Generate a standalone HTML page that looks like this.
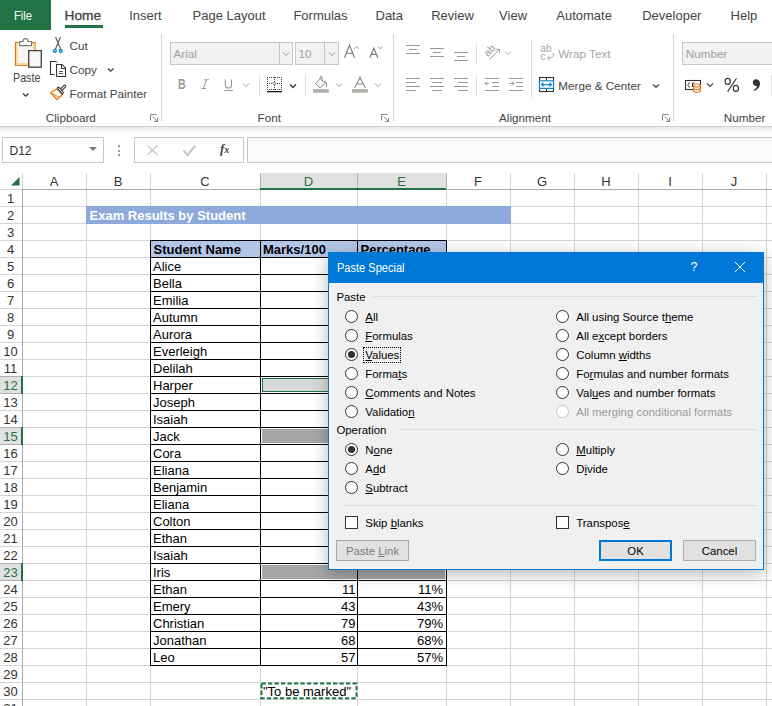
<!DOCTYPE html><html><head><meta charset="utf-8"><style>
*{margin:0;padding:0;box-sizing:border-box}
html,body{width:772px;height:706px;overflow:hidden;background:#fff;font-family:"Liberation Sans",sans-serif}
.t{position:absolute;line-height:1;white-space:nowrap}
.r{position:absolute}
</style></head><body>
<div class="r" style="left:0px;top:0px;width:772px;height:126px;background:#fff;"></div>
<div class="r" style="left:0px;top:0px;width:51px;height:30px;background:#217346;"></div>
<div class="t" style="left:14.20px;top:9.62px;font-size:12.5px;color:#fff;font-weight:normal;transform:scaleX(0.9);transform-origin:0 0">File</div>
<div class="t" style="left:64.60px;top:8.70px;font-size:13.7px;color:#444;font-weight:normal;-webkit-text-stroke:0.35px #444">Home</div>
<div class="t" style="left:129.20px;top:9.30px;font-size:13px;color:#444;font-weight:normal;">Insert</div>
<div class="t" style="left:192.50px;top:9.30px;font-size:13px;color:#444;font-weight:normal;">Page Layout</div>
<div class="t" style="left:293.40px;top:9.30px;font-size:13px;color:#444;font-weight:normal;">Formulas</div>
<div class="t" style="left:375.50px;top:9.30px;font-size:13px;color:#444;font-weight:normal;">Data</div>
<div class="t" style="left:431.20px;top:9.30px;font-size:13px;color:#444;font-weight:normal;">Review</div>
<div class="t" style="left:499.10px;top:9.30px;font-size:13px;color:#444;font-weight:normal;">View</div>
<div class="t" style="left:556.30px;top:9.30px;font-size:13px;color:#444;font-weight:normal;">Automate</div>
<div class="t" style="left:642.20px;top:9.30px;font-size:13px;color:#444;font-weight:normal;">Developer</div>
<div class="t" style="left:730.60px;top:9.30px;font-size:13px;color:#444;font-weight:normal;">Help</div>
<div class="r" style="left:65px;top:25px;width:38px;height:3px;background:#217346;"></div>
<div class="r" style="left:0px;top:126px;width:772px;height:47px;background:#fff;"></div>
<div class="r" style="left:0px;top:173px;width:772px;height:16px;background:#fff;"></div>
<div class="r" style="left:260px;top:173px;width:186px;height:16px;background:#e1e1e1;"></div>
<div class="r" style="left:86px;top:173px;width:1px;height:533px;background:#d4d4d4;"></div>
<div class="r" style="left:150px;top:173px;width:1px;height:533px;background:#d4d4d4;"></div>
<div class="r" style="left:260px;top:173px;width:1px;height:533px;background:#d4d4d4;"></div>
<div class="r" style="left:357px;top:173px;width:1px;height:533px;background:#d4d4d4;"></div>
<div class="r" style="left:446px;top:173px;width:1px;height:533px;background:#d4d4d4;"></div>
<div class="r" style="left:510px;top:173px;width:1px;height:533px;background:#d4d4d4;"></div>
<div class="r" style="left:574px;top:173px;width:1px;height:533px;background:#d4d4d4;"></div>
<div class="r" style="left:638px;top:173px;width:1px;height:533px;background:#d4d4d4;"></div>
<div class="r" style="left:702px;top:173px;width:1px;height:533px;background:#d4d4d4;"></div>
<div class="r" style="left:766px;top:173px;width:1px;height:533px;background:#d4d4d4;"></div>
<div class="r" style="left:0px;top:189px;width:772px;height:1px;background:#d4d4d4;"></div>
<div class="r" style="left:0px;top:206px;width:772px;height:1px;background:#d4d4d4;"></div>
<div class="r" style="left:0px;top:223px;width:772px;height:1px;background:#d4d4d4;"></div>
<div class="r" style="left:0px;top:240px;width:772px;height:1px;background:#d4d4d4;"></div>
<div class="r" style="left:0px;top:257px;width:772px;height:1px;background:#d4d4d4;"></div>
<div class="r" style="left:0px;top:274px;width:772px;height:1px;background:#d4d4d4;"></div>
<div class="r" style="left:0px;top:291px;width:772px;height:1px;background:#d4d4d4;"></div>
<div class="r" style="left:0px;top:308px;width:772px;height:1px;background:#d4d4d4;"></div>
<div class="r" style="left:0px;top:325px;width:772px;height:1px;background:#d4d4d4;"></div>
<div class="r" style="left:0px;top:342px;width:772px;height:1px;background:#d4d4d4;"></div>
<div class="r" style="left:0px;top:359px;width:772px;height:1px;background:#d4d4d4;"></div>
<div class="r" style="left:0px;top:376px;width:772px;height:1px;background:#d4d4d4;"></div>
<div class="r" style="left:0px;top:393px;width:772px;height:1px;background:#d4d4d4;"></div>
<div class="r" style="left:0px;top:410px;width:772px;height:1px;background:#d4d4d4;"></div>
<div class="r" style="left:0px;top:427px;width:772px;height:1px;background:#d4d4d4;"></div>
<div class="r" style="left:0px;top:444px;width:772px;height:1px;background:#d4d4d4;"></div>
<div class="r" style="left:0px;top:461px;width:772px;height:1px;background:#d4d4d4;"></div>
<div class="r" style="left:0px;top:478px;width:772px;height:1px;background:#d4d4d4;"></div>
<div class="r" style="left:0px;top:495px;width:772px;height:1px;background:#d4d4d4;"></div>
<div class="r" style="left:0px;top:512px;width:772px;height:1px;background:#d4d4d4;"></div>
<div class="r" style="left:0px;top:529px;width:772px;height:1px;background:#d4d4d4;"></div>
<div class="r" style="left:0px;top:546px;width:772px;height:1px;background:#d4d4d4;"></div>
<div class="r" style="left:0px;top:563px;width:772px;height:1px;background:#d4d4d4;"></div>
<div class="r" style="left:0px;top:580px;width:772px;height:1px;background:#d4d4d4;"></div>
<div class="r" style="left:0px;top:597px;width:772px;height:1px;background:#d4d4d4;"></div>
<div class="r" style="left:0px;top:614px;width:772px;height:1px;background:#d4d4d4;"></div>
<div class="r" style="left:0px;top:631px;width:772px;height:1px;background:#d4d4d4;"></div>
<div class="r" style="left:0px;top:648px;width:772px;height:1px;background:#d4d4d4;"></div>
<div class="r" style="left:0px;top:665px;width:772px;height:1px;background:#d4d4d4;"></div>
<div class="r" style="left:0px;top:682px;width:772px;height:1px;background:#d4d4d4;"></div>
<div class="r" style="left:0px;top:699px;width:772px;height:1px;background:#d4d4d4;"></div>
<div class="r" style="left:0px;top:716px;width:772px;height:1px;background:#d4d4d4;"></div>
<div class="r" style="left:22px;top:173px;width:1px;height:16px;background:#d4d4d4;"></div>
<div class="r" style="left:22px;top:189px;width:1px;height:517px;background:#ababab;"></div>
<div class="r" style="left:22px;top:189px;width:772px;height:1px;background:#ababab;"></div>
<div class="r" style="left:260px;top:188px;width:186px;height:2px;background:#217346;"></div>
<div class="r" style="left:260px;top:173px;width:1px;height:15px;background:#b0b0b0;"></div>
<div class="r" style="left:357px;top:173px;width:1px;height:15px;background:#b0b0b0;"></div>
<div class="r" style="left:446px;top:173px;width:1px;height:15px;background:#b0b0b0;"></div>
<svg class="r" style="left:10.5px;top:177.4px" width="9" height="9"><polygon points="8.5,0 8.5,8.5 0,8.5" fill="#217346"/></svg>
<div class="t" style="left:22px;width:64px;top:174.5px;font-size:13px;text-align:center;color:#333">A</div>
<div class="t" style="left:86px;width:64px;top:174.5px;font-size:13px;text-align:center;color:#333">B</div>
<div class="t" style="left:150px;width:110px;top:174.5px;font-size:13px;text-align:center;color:#333">C</div>
<div class="t" style="left:260px;width:97px;top:174.5px;font-size:13px;text-align:center;color:#217346">D</div>
<div class="t" style="left:357px;width:89px;top:174.5px;font-size:13px;text-align:center;color:#217346">E</div>
<div class="t" style="left:446px;width:64px;top:174.5px;font-size:13px;text-align:center;color:#333">F</div>
<div class="t" style="left:510px;width:64px;top:174.5px;font-size:13px;text-align:center;color:#333">G</div>
<div class="t" style="left:574px;width:64px;top:174.5px;font-size:13px;text-align:center;color:#333">H</div>
<div class="t" style="left:638px;width:64px;top:174.5px;font-size:13px;text-align:center;color:#333">I</div>
<div class="t" style="left:702px;width:64px;top:174.5px;font-size:13px;text-align:center;color:#333">J</div>
<div class="t" style="left:0;width:21px;top:191.5px;font-size:13px;text-align:center;color:#333">1</div>
<div class="t" style="left:0;width:21px;top:208.5px;font-size:13px;text-align:center;color:#333">2</div>
<div class="t" style="left:0;width:21px;top:225.5px;font-size:13px;text-align:center;color:#333">3</div>
<div class="t" style="left:0;width:21px;top:242.5px;font-size:13px;text-align:center;color:#333">4</div>
<div class="t" style="left:0;width:21px;top:259.5px;font-size:13px;text-align:center;color:#333">5</div>
<div class="t" style="left:0;width:21px;top:276.5px;font-size:13px;text-align:center;color:#333">6</div>
<div class="t" style="left:0;width:21px;top:293.5px;font-size:13px;text-align:center;color:#333">7</div>
<div class="t" style="left:0;width:21px;top:310.5px;font-size:13px;text-align:center;color:#333">8</div>
<div class="t" style="left:0;width:21px;top:327.5px;font-size:13px;text-align:center;color:#333">9</div>
<div class="t" style="left:0;width:21px;top:344.5px;font-size:13px;text-align:center;color:#333">10</div>
<div class="t" style="left:0;width:21px;top:361.5px;font-size:13px;text-align:center;color:#333">11</div>
<div class="r" style="left:0px;top:376px;width:22px;height:18px;background:#e1e1e1;"></div>
<div class="r" style="left:0px;top:376px;width:21px;height:1px;background:#b0b0b0;"></div>
<div class="r" style="left:0px;top:393px;width:21px;height:1px;background:#b0b0b0;"></div>
<div class="r" style="left:21px;top:376px;width:2px;height:18px;background:#217346;"></div>
<div class="t" style="left:0;width:21px;top:378.5px;font-size:13px;text-align:center;color:#217346">12</div>
<div class="t" style="left:0;width:21px;top:395.5px;font-size:13px;text-align:center;color:#333">13</div>
<div class="t" style="left:0;width:21px;top:412.5px;font-size:13px;text-align:center;color:#333">14</div>
<div class="r" style="left:0px;top:427px;width:22px;height:18px;background:#e1e1e1;"></div>
<div class="r" style="left:0px;top:427px;width:21px;height:1px;background:#b0b0b0;"></div>
<div class="r" style="left:0px;top:444px;width:21px;height:1px;background:#b0b0b0;"></div>
<div class="r" style="left:21px;top:427px;width:2px;height:18px;background:#217346;"></div>
<div class="t" style="left:0;width:21px;top:429.5px;font-size:13px;text-align:center;color:#217346">15</div>
<div class="t" style="left:0;width:21px;top:446.5px;font-size:13px;text-align:center;color:#333">16</div>
<div class="t" style="left:0;width:21px;top:463.5px;font-size:13px;text-align:center;color:#333">17</div>
<div class="t" style="left:0;width:21px;top:480.5px;font-size:13px;text-align:center;color:#333">18</div>
<div class="t" style="left:0;width:21px;top:497.5px;font-size:13px;text-align:center;color:#333">19</div>
<div class="t" style="left:0;width:21px;top:514.5px;font-size:13px;text-align:center;color:#333">20</div>
<div class="t" style="left:0;width:21px;top:531.5px;font-size:13px;text-align:center;color:#333">21</div>
<div class="t" style="left:0;width:21px;top:548.5px;font-size:13px;text-align:center;color:#333">22</div>
<div class="r" style="left:0px;top:563px;width:22px;height:18px;background:#e1e1e1;"></div>
<div class="r" style="left:0px;top:563px;width:21px;height:1px;background:#b0b0b0;"></div>
<div class="r" style="left:0px;top:580px;width:21px;height:1px;background:#b0b0b0;"></div>
<div class="r" style="left:21px;top:563px;width:2px;height:18px;background:#217346;"></div>
<div class="t" style="left:0;width:21px;top:565.5px;font-size:13px;text-align:center;color:#217346">23</div>
<div class="t" style="left:0;width:21px;top:582.5px;font-size:13px;text-align:center;color:#333">24</div>
<div class="t" style="left:0;width:21px;top:599.5px;font-size:13px;text-align:center;color:#333">25</div>
<div class="t" style="left:0;width:21px;top:616.5px;font-size:13px;text-align:center;color:#333">26</div>
<div class="t" style="left:0;width:21px;top:633.5px;font-size:13px;text-align:center;color:#333">27</div>
<div class="t" style="left:0;width:21px;top:650.5px;font-size:13px;text-align:center;color:#333">28</div>
<div class="t" style="left:0;width:21px;top:667.5px;font-size:13px;text-align:center;color:#333">29</div>
<div class="t" style="left:0;width:21px;top:684.5px;font-size:13px;text-align:center;color:#333">30</div>
<div class="t" style="left:0;width:21px;top:701.5px;font-size:13px;text-align:center;color:#333">31</div>
<div class="r" style="left:86px;top:206px;width:425px;height:18px;background:#8ea9db;"></div>
<div class="t" style="left:89.50px;top:209.00px;font-size:13px;color:#fff;font-weight:bold;">Exam Results by Student</div>
<div class="r" style="left:262px;top:378px;width:95px;height:14px;background:#d9d9d9;box-shadow:inset 0 0 0 1px #217346"></div>
<div class="r" style="left:262px;top:429px;width:183px;height:14px;background:#a6a6a6;"></div>
<div class="r" style="left:262px;top:565px;width:183px;height:14px;background:#a6a6a6;"></div>
<div class="r" style="left:150px;top:240px;width:297px;height:18px;background:#b4c6e7;"></div>
<div class="r" style="left:150px;top:240px;width:297px;height:1px;background:#000;"></div>
<div class="r" style="left:150px;top:257px;width:297px;height:1px;background:#000;"></div>
<div class="r" style="left:150px;top:274px;width:297px;height:1px;background:#000;"></div>
<div class="r" style="left:150px;top:291px;width:297px;height:1px;background:#000;"></div>
<div class="r" style="left:150px;top:308px;width:297px;height:1px;background:#000;"></div>
<div class="r" style="left:150px;top:325px;width:297px;height:1px;background:#000;"></div>
<div class="r" style="left:150px;top:342px;width:297px;height:1px;background:#000;"></div>
<div class="r" style="left:150px;top:359px;width:297px;height:1px;background:#000;"></div>
<div class="r" style="left:150px;top:376px;width:297px;height:1px;background:#000;"></div>
<div class="r" style="left:150px;top:393px;width:297px;height:1px;background:#000;"></div>
<div class="r" style="left:150px;top:410px;width:297px;height:1px;background:#000;"></div>
<div class="r" style="left:150px;top:427px;width:297px;height:1px;background:#000;"></div>
<div class="r" style="left:150px;top:444px;width:297px;height:1px;background:#000;"></div>
<div class="r" style="left:150px;top:461px;width:297px;height:1px;background:#000;"></div>
<div class="r" style="left:150px;top:478px;width:297px;height:1px;background:#000;"></div>
<div class="r" style="left:150px;top:495px;width:297px;height:1px;background:#000;"></div>
<div class="r" style="left:150px;top:512px;width:297px;height:1px;background:#000;"></div>
<div class="r" style="left:150px;top:529px;width:297px;height:1px;background:#000;"></div>
<div class="r" style="left:150px;top:546px;width:297px;height:1px;background:#000;"></div>
<div class="r" style="left:150px;top:563px;width:297px;height:1px;background:#000;"></div>
<div class="r" style="left:150px;top:580px;width:297px;height:1px;background:#000;"></div>
<div class="r" style="left:150px;top:597px;width:297px;height:1px;background:#000;"></div>
<div class="r" style="left:150px;top:614px;width:297px;height:1px;background:#000;"></div>
<div class="r" style="left:150px;top:631px;width:297px;height:1px;background:#000;"></div>
<div class="r" style="left:150px;top:648px;width:297px;height:1px;background:#000;"></div>
<div class="r" style="left:150px;top:665px;width:297px;height:1px;background:#000;"></div>
<div class="r" style="left:150px;top:240px;width:1px;height:426px;background:#000;"></div>
<div class="r" style="left:260px;top:240px;width:1px;height:426px;background:#000;"></div>
<div class="r" style="left:357px;top:240px;width:1px;height:426px;background:#000;"></div>
<div class="r" style="left:446px;top:240px;width:1px;height:426px;background:#000;"></div>
<div class="t" style="left:153.50px;top:242.50px;font-size:13px;color:#000;font-weight:bold;">Student Name</div>
<div class="t" style="left:263.00px;top:242.50px;font-size:13px;color:#000;font-weight:bold;">Marks/100</div>
<div class="t" style="left:360.50px;top:242.50px;font-size:13px;color:#000;font-weight:bold;">Percentage</div>
<div class="t" style="left:153.00px;top:259.50px;font-size:13px;color:#000;font-weight:normal;">Alice</div>
<div class="t" style="left:153.00px;top:276.50px;font-size:13px;color:#000;font-weight:normal;">Bella</div>
<div class="t" style="left:153.00px;top:293.50px;font-size:13px;color:#000;font-weight:normal;">Emilia</div>
<div class="t" style="left:153.00px;top:310.50px;font-size:13px;color:#000;font-weight:normal;">Autumn</div>
<div class="t" style="left:153.00px;top:327.50px;font-size:13px;color:#000;font-weight:normal;">Aurora</div>
<div class="t" style="left:153.00px;top:344.50px;font-size:13px;color:#000;font-weight:normal;">Everleigh</div>
<div class="t" style="left:153.00px;top:361.50px;font-size:13px;color:#000;font-weight:normal;">Delilah</div>
<div class="t" style="left:153.00px;top:378.50px;font-size:13px;color:#000;font-weight:normal;">Harper</div>
<div class="t" style="left:153.00px;top:395.50px;font-size:13px;color:#000;font-weight:normal;">Joseph</div>
<div class="t" style="left:153.00px;top:412.50px;font-size:13px;color:#000;font-weight:normal;">Isaiah</div>
<div class="t" style="left:153.00px;top:429.50px;font-size:13px;color:#000;font-weight:normal;">Jack</div>
<div class="t" style="left:153.00px;top:446.50px;font-size:13px;color:#000;font-weight:normal;">Cora</div>
<div class="t" style="left:153.00px;top:463.50px;font-size:13px;color:#000;font-weight:normal;">Eliana</div>
<div class="t" style="left:153.00px;top:480.50px;font-size:13px;color:#000;font-weight:normal;">Benjamin</div>
<div class="t" style="left:153.00px;top:497.50px;font-size:13px;color:#000;font-weight:normal;">Eliana</div>
<div class="t" style="left:153.00px;top:514.50px;font-size:13px;color:#000;font-weight:normal;">Colton</div>
<div class="t" style="left:153.00px;top:531.50px;font-size:13px;color:#000;font-weight:normal;">Ethan</div>
<div class="t" style="left:153.00px;top:548.50px;font-size:13px;color:#000;font-weight:normal;">Isaiah</div>
<div class="t" style="left:153.00px;top:565.50px;font-size:13px;color:#000;font-weight:normal;">Iris</div>
<div class="t" style="left:153.00px;top:582.50px;font-size:13px;color:#000;font-weight:normal;">Ethan</div>
<div class="t" style="left:153.00px;top:599.50px;font-size:13px;color:#000;font-weight:normal;">Emery</div>
<div class="t" style="left:153.00px;top:616.50px;font-size:13px;color:#000;font-weight:normal;">Christian</div>
<div class="t" style="left:153.00px;top:633.50px;font-size:13px;color:#000;font-weight:normal;">Jonathan</div>
<div class="t" style="left:153.00px;top:650.50px;font-size:13px;color:#000;font-weight:normal;">Leo</div>
<div class="t" style="left:261px;width:94.5px;text-align:right;top:582.5px;font-size:13px">11</div>
<div class="t" style="left:358px;width:85px;text-align:right;top:582.5px;font-size:13px">11%</div>
<div class="t" style="left:261px;width:94.5px;text-align:right;top:599.5px;font-size:13px">43</div>
<div class="t" style="left:358px;width:85px;text-align:right;top:599.5px;font-size:13px">43%</div>
<div class="t" style="left:261px;width:94.5px;text-align:right;top:616.5px;font-size:13px">79</div>
<div class="t" style="left:358px;width:85px;text-align:right;top:616.5px;font-size:13px">79%</div>
<div class="t" style="left:261px;width:94.5px;text-align:right;top:633.5px;font-size:13px">68</div>
<div class="t" style="left:358px;width:85px;text-align:right;top:633.5px;font-size:13px">68%</div>
<div class="t" style="left:261px;width:94.5px;text-align:right;top:650.5px;font-size:13px">57</div>
<div class="t" style="left:358px;width:85px;text-align:right;top:650.5px;font-size:13px">57%</div>
<svg class="r" style="left:260px;top:682px" width="99" height="19"><rect x="1.5" y="1.5" width="95" height="14.7" fill="none" stroke="#217346" stroke-width="2" stroke-dasharray="4.3 2.2"/></svg>
<div class="t" style="left:263.00px;top:684.50px;font-size:13px;color:#000;font-weight:normal;">"To be marked"</div>
<svg class="r" style="left:12px;top:35px;" width="32" height="35" viewBox="0 0 32 35"><rect x="3.5" y="7.5" width="19.6" height="22.8" fill="#f7f7f7" stroke="#e8740c" stroke-width="1.1"/><path d="M4.9,8 V28.9 H16" fill="none" stroke="#f9d88f" stroke-width="1.6"/><path d="M21.7,8 V13.5" fill="none" stroke="#f9d88f" stroke-width="1.6"/><path d="M7.7,10.6 V6.5 H11 C11,2.6 16,2.6 16,6.5 H19.5 V10.6 Z" fill="#fff" stroke="#777" stroke-width="1.1"/><rect x="16.7" y="15.6" width="12.6" height="16.6" fill="#f7f7f7" stroke="#404040" stroke-width="1.3"/></svg>
<div class="t" style="left:12.80px;top:72.49px;font-size:12.3px;color:#444;font-weight:normal;transform:scaleX(0.87);transform-origin:0 0">Paste</div>
<svg class="r" style="left:21.75px;top:91.5px;" width="7.5" height="6" viewBox="0 0 7.5 6"><polyline points="1,1.5 3.75,4.25 6.5,1.5" fill="none" stroke="#333" stroke-width="1.2"/></svg>
<svg class="r" style="left:48px;top:34px;" width="20" height="22" viewBox="0 0 20 22"><path d="M7.5,3 L12.5,15 M12.5,3 L7.5,15" stroke="#555" stroke-width="1.1" fill="none"/><circle cx="6.9" cy="17" r="1.4" fill="#fff" stroke="#1b87d0" stroke-width="1.5"/><circle cx="12.7" cy="17" r="1.4" fill="#fff" stroke="#1b87d0" stroke-width="1.5"/></svg>
<div class="t" style="left:69.50px;top:39.80px;font-size:11.7px;color:#444;font-weight:normal;">Cut</div>
<svg class="r" style="left:47px;top:58px;" width="22" height="22" viewBox="0 0 22 22"><path d="M9,3.5 H3.5 V16.5 H7.5" fill="none" stroke="#333" stroke-width="1.05"/><path d="M9.2,3.5 L10.5,4.7" stroke="#333" stroke-width="1"/><path d="M9.5,6.5 H15 L18.5,10 V18.5 H9.5 Z" fill="#fff" stroke="#333" stroke-width="1.05"/><path d="M14.5,6.5 V10.5 H18.5" fill="none" stroke="#333" stroke-width="1"/><path d="M12,13.5 H16 M12,15.5 H16" stroke="#555" stroke-width="1"/></svg>
<div class="t" style="left:69.50px;top:63.70px;font-size:11.7px;color:#444;font-weight:normal;">Copy</div>
<svg class="r" style="left:107.05px;top:66.5px;" width="7.5" height="6" viewBox="0 0 7.5 6"><polyline points="1,1.5 3.75,4.25 6.5,1.5" fill="none" stroke="#333" stroke-width="1.2"/></svg>
<svg class="r" style="left:46px;top:82px;" width="24" height="20" viewBox="0 0 24 20"><polygon points="4.5,10.5 11,6.8 16.3,12.8 11,17.5" fill="#fff" stroke="#e8740c" stroke-width="1.2" stroke-linejoin="round"/><path d="M6.5,11.5 L13,15.3" stroke="#e8740c" stroke-width="1"/><polygon points="9.5,14 13,15.5 11,17" fill="#fbd88a"/><path d="M14.8,8.2 L18.8,4.2" stroke="#333" stroke-width="3.2" stroke-linecap="round"/><path d="M14.8,8.2 L18.8,4.2" stroke="#fff" stroke-width="1.1" stroke-linecap="round"/><polygon points="11.3,6 12.8,5 17.5,10.5 16.3,12" fill="#fff" stroke="#333" stroke-width="1.1" stroke-linejoin="round"/></svg>
<div class="t" style="left:69.50px;top:88.00px;font-size:11.7px;color:#444;font-weight:normal;">Format Painter</div>
<div class="t" style="left:45.80px;top:111.90px;font-size:11.7px;color:#444;font-weight:normal;">Clipboard</div>
<svg class="r" style="left:150px;top:114px;" width="9" height="9" viewBox="0 0 9 9"><path d="M0.5,6.5 V0.5 H6.5" fill="none" stroke="#8a8a8a" stroke-width="1"/><path d="M2.5,2.5 L7.5,7.5 M7.5,4 V7.5 H4" fill="none" stroke="#8a8a8a" stroke-width="1"/></svg>
<div class="r" style="left:161px;top:34px;width:1px;height:88px;background:#d6d6d6;"></div>
<div class="r" style="left:170px;top:42px;width:123px;height:23px;background:#f3f2f1;border:1px solid #c8c6c4"></div>
<div class="r" style="left:279px;top:42px;width:1px;height:23px;background:#c8c6c4;"></div>
<svg class="r" style="left:282.0px;top:51.0px;" width="8" height="6" viewBox="0 0 8 6"><polyline points="1,1.5 4.0,4.5 7,1.5" fill="none" stroke="#999" stroke-width="1"/></svg>
<div class="t" style="left:173.50px;top:48.00px;font-size:11.7px;color:#a19f9d;font-weight:normal;">Arial</div>
<div class="r" style="left:295px;top:42px;width:44px;height:23px;background:#f3f2f1;border:1px solid #c8c6c4"></div>
<div class="r" style="left:324px;top:42px;width:1px;height:23px;background:#c8c6c4;"></div>
<svg class="r" style="left:327.5px;top:51.0px;" width="8" height="6" viewBox="0 0 8 6"><polyline points="1,1.5 4.0,4.5 7,1.5" fill="none" stroke="#999" stroke-width="1"/></svg>
<div class="t" style="left:298.50px;top:48.00px;font-size:11.7px;color:#a19f9d;font-weight:normal;">10</div>
<svg class="r" style="left:336px;top:38px;" width="56" height="28" viewBox="0 0 56 28"><path d="M8.5,19.7 L13.5,7 L18.5,19.7 M10.4,15.2 H16.6" fill="none" stroke="#7a7a7a" stroke-width="1.15"/><polyline points="18.3,10.8 20.5,8.6 22.7,10.8" fill="none" stroke="#8a8a8a" stroke-width="0.9"/><path d="M33.8,19.7 L37.8,10.2 L41.8,19.7 M35.2,16.3 H40.4" fill="none" stroke="#7a7a7a" stroke-width="1.15"/><polyline points="42.2,8.6 44.4,10.8 46.6,8.6" fill="none" stroke="#8a8a8a" stroke-width="0.9"/></svg>
<div class="t" style="left:177.60px;top:76.68px;font-size:14.2px;color:#9a9a9a;font-weight:bold;transform:scaleX(0.75);transform-origin:0 0">B</div>
<svg class="r" style="left:198px;top:77px;" width="14" height="14" viewBox="0 0 14 14"><path d="M6.2,2.8 H11 M8.6,2.8 L5.4,11.4 M3.2,11.4 H8" fill="none" stroke="#9a9a9a" stroke-width="1.05"/></svg>
<svg class="r" style="left:222px;top:77px;" width="14" height="15" viewBox="0 0 14 15"><path d="M3.3,2.5 V8.3 C3.3,12.1 9.5,12.1 9.5,8.3 V2.5" fill="none" stroke="#9a9a9a" stroke-width="1.1"/><rect x="2.3" y="13" width="8.6" height="1" fill="#9a9a9a"/></svg>
<svg class="r" style="left:242.4px;top:82px;" width="8" height="6" viewBox="0 0 8 6"><polyline points="1,1.5 4.0,4.5 7,1.5" fill="none" stroke="#999" stroke-width="1"/></svg>
<div class="r" style="left:259px;top:75px;width:1px;height:21px;background:#e1e1e1;"></div>
<svg class="r" style="left:264px;top:74px;" width="22" height="22" viewBox="0 0 22 22"><rect x="3" y="13" width="1" height="1" fill="#444"/><rect x="10" y="3" width="1" height="1" fill="#444"/><rect x="10" y="9" width="1" height="1" fill="#444"/><rect x="10" y="15" width="1" height="1" fill="#444"/><rect x="17" y="5" width="1" height="1" fill="#444"/><rect x="17" y="11" width="1" height="1" fill="#444"/><rect x="3" y="3" width="1" height="1" fill="#444"/><rect x="3" y="9" width="1" height="1" fill="#444"/><rect x="5" y="3" width="1" height="1" fill="#444"/><rect x="5" y="9" width="1" height="1" fill="#444"/><rect x="3" y="15" width="1" height="1" fill="#444"/><rect x="7" y="3" width="1" height="1" fill="#444"/><rect x="7" y="9" width="1" height="1" fill="#444"/><rect x="5" y="15" width="1" height="1" fill="#444"/><rect x="10" y="5" width="1" height="1" fill="#444"/><rect x="9" y="3" width="1" height="1" fill="#444"/><rect x="9" y="9" width="1" height="1" fill="#444"/><rect x="9" y="15" width="1" height="1" fill="#444"/><rect x="10" y="11" width="1" height="1" fill="#444"/><rect x="7" y="15" width="1" height="1" fill="#444"/><rect x="17" y="7" width="1" height="1" fill="#444"/><rect x="17" y="13" width="1" height="1" fill="#444"/><rect x="11" y="3" width="1" height="1" fill="#444"/><rect x="11" y="9" width="1" height="1" fill="#444"/><rect x="3" y="5" width="1" height="1" fill="#444"/><rect x="13" y="3" width="1" height="1" fill="#444"/><rect x="13" y="9" width="1" height="1" fill="#444"/><rect x="13" y="15" width="1" height="1" fill="#444"/><rect x="3" y="11" width="1" height="1" fill="#444"/><rect x="11" y="15" width="1" height="1" fill="#444"/><rect x="10" y="7" width="1" height="1" fill="#444"/><rect x="10" y="13" width="1" height="1" fill="#444"/><rect x="15" y="3" width="1" height="1" fill="#444"/><rect x="15" y="9" width="1" height="1" fill="#444"/><rect x="17" y="3" width="1" height="1" fill="#444"/><rect x="17" y="9" width="1" height="1" fill="#444"/><rect x="15" y="15" width="1" height="1" fill="#444"/><rect x="17" y="15" width="1" height="1" fill="#444"/><rect x="3" y="7" width="1" height="1" fill="#444"/><rect x="3" y="17" width="15" height="1.3" fill="#1a1a1a"/><path d="M10.5,8 L12,9.5 L10.5,11 L9,9.5 Z" fill="#fff" stroke="#444" stroke-width="0.8"/></svg>
<svg class="r" style="left:288.5px;top:82.5px;" width="8" height="6" viewBox="0 0 8 6"><polyline points="1,1.5 4.0,4.5 7,1.5" fill="none" stroke="#333" stroke-width="1.3"/></svg>
<div class="r" style="left:305px;top:75px;width:1px;height:21px;background:#e1e1e1;"></div>
<svg class="r" style="left:310px;top:74px;" width="22" height="20" viewBox="0 0 22 20"><path d="M5.5,9.5 L10.3,4.5 L15,9.3 L10.2,14 Z" fill="#f5f5f5" stroke="#888" stroke-width="1"/><path d="M10.3,4.5 V2.8 C10.3,1.8 12,1.8 12,2.8 V7" fill="none" stroke="#888" stroke-width="0.9"/><path d="M14.3,7 C16.5,7.5 17,10 16.3,13" fill="none" stroke="#888" stroke-width="1.1"/><rect x="3" y="15" width="15.8" height="3.8" fill="#b5b1ad"/></svg>
<svg class="r" style="left:334.5px;top:82.3px;" width="8" height="6" viewBox="0 0 8 6"><polyline points="1,1.5 4.0,4.5 7,1.5" fill="none" stroke="#999" stroke-width="1"/></svg>
<svg class="r" style="left:350px;top:74px;" width="20" height="20" viewBox="0 0 20 20"><path d="M4.8,13.7 L10,3.2 L15.2,13.7 M6.6,10 H13.4" fill="none" stroke="#8a8a8a" stroke-width="1.1"/><rect x="2" y="15" width="15.8" height="3.8" fill="#b5b1ad"/></svg>
<svg class="r" style="left:373.6px;top:82.3px;" width="8" height="6" viewBox="0 0 8 6"><polyline points="1,1.5 4.0,4.5 7,1.5" fill="none" stroke="#999" stroke-width="1"/></svg>
<div class="t" style="left:257.60px;top:111.90px;font-size:11.7px;color:#444;font-weight:normal;">Font</div>
<svg class="r" style="left:381px;top:114px;" width="9" height="9" viewBox="0 0 9 9"><path d="M0.5,6.5 V0.5 H6.5" fill="none" stroke="#8a8a8a" stroke-width="1"/><path d="M2.5,2.5 L7.5,7.5 M7.5,4 V7.5 H4" fill="none" stroke="#8a8a8a" stroke-width="1"/></svg>
<div class="r" style="left:393px;top:34px;width:1px;height:88px;background:#d6d6d6;"></div>
<div class="r" style="left:406px;top:45px;width:14px;height:1px;background:#999;"></div>
<div class="r" style="left:409px;top:49px;width:8px;height:1px;background:#999;"></div>
<div class="r" style="left:406px;top:53px;width:14px;height:1px;background:#999;"></div>
<div class="r" style="left:430px;top:48px;width:14px;height:1px;background:#999;"></div>
<div class="r" style="left:433px;top:52px;width:8px;height:1px;background:#999;"></div>
<div class="r" style="left:430px;top:56px;width:14px;height:1px;background:#999;"></div>
<div class="r" style="left:454px;top:52px;width:14px;height:1px;background:#999;"></div>
<div class="r" style="left:457px;top:56px;width:8px;height:1px;background:#999;"></div>
<div class="r" style="left:454px;top:60px;width:14px;height:1px;background:#999;"></div>
<div class="r" style="left:476px;top:43px;width:1px;height:21px;background:#e1e1e1;"></div>
<svg class="r" style="left:480px;top:40px;" width="22" height="22" viewBox="0 0 22 22"><text x="9.3" y="14.2" text-anchor="middle" font-family="Liberation Sans" font-size="10.5" fill="#999" transform="rotate(-45 9.3 10.5)">ab</text><path d="M9.3,19.5 L19.5,9.3 M16.3,9.3 H19.5 V12.5" fill="none" stroke="#999" stroke-width="1"/></svg>
<svg class="r" style="left:503.5px;top:50px;" width="8" height="6" viewBox="0 0 8 6"><polyline points="1,1.5 4.0,4.5 7,1.5" fill="none" stroke="#aaa" stroke-width="1"/></svg>
<div class="r" style="left:406px;top:78px;width:14px;height:1px;background:#999;"></div>
<div class="r" style="left:406px;top:82px;width:10px;height:1px;background:#999;"></div>
<div class="r" style="left:406px;top:86px;width:14px;height:1px;background:#999;"></div>
<div class="r" style="left:406px;top:90px;width:10px;height:1px;background:#999;"></div>
<div class="r" style="left:430px;top:78px;width:14px;height:1px;background:#999;"></div>
<div class="r" style="left:432px;top:82px;width:10px;height:1px;background:#999;"></div>
<div class="r" style="left:430px;top:86px;width:14px;height:1px;background:#999;"></div>
<div class="r" style="left:432px;top:90px;width:10px;height:1px;background:#999;"></div>
<div class="r" style="left:454px;top:78px;width:14px;height:1px;background:#999;"></div>
<div class="r" style="left:458px;top:82px;width:10px;height:1px;background:#999;"></div>
<div class="r" style="left:454px;top:86px;width:14px;height:1px;background:#999;"></div>
<div class="r" style="left:458px;top:90px;width:10px;height:1px;background:#999;"></div>
<div class="r" style="left:476px;top:75px;width:1px;height:21px;background:#e1e1e1;"></div>
<div class="r" style="left:485px;top:78px;width:14px;height:1px;background:#999;"></div>
<div class="r" style="left:485px;top:90px;width:14px;height:1px;background:#999;"></div>
<div class="r" style="left:492px;top:82px;width:7px;height:1px;background:#999;"></div>
<div class="r" style="left:492px;top:86px;width:7px;height:1px;background:#999;"></div>
<svg class="r" style="left:484px;top:80px;" width="6" height="7" viewBox="0 0 6 7"><path d="M5,3.5 H1 M3,1.5 L1,3.5 L3,5.5" fill="none" stroke="#999" stroke-width="1"/></svg>
<div class="r" style="left:509px;top:78px;width:14px;height:1px;background:#999;"></div>
<div class="r" style="left:509px;top:90px;width:14px;height:1px;background:#999;"></div>
<div class="r" style="left:516px;top:82px;width:7px;height:1px;background:#999;"></div>
<div class="r" style="left:516px;top:86px;width:7px;height:1px;background:#999;"></div>
<svg class="r" style="left:509px;top:80px;" width="6" height="7" viewBox="0 0 6 7"><path d="M0.5,3.5 H5 M3,1.5 L5,3.5 L3,5.5" fill="none" stroke="#999" stroke-width="1"/></svg>
<div class="r" style="left:531px;top:40px;width:1px;height:58px;background:#e1e1e1;"></div>
<svg class="r" style="left:536px;top:42px;" width="22" height="20" viewBox="0 0 22 20"><text x="4.3" y="10.4" font-family="Liberation Sans" font-size="10.3" fill="#a6a6a6">ab</text><text x="4.3" y="18" font-family="Liberation Sans" font-size="11" fill="#a6a6a6">c</text><path d="M17,11 C18.5,14 16.5,16 11.5,16 M13.8,13.8 L11.5,16 L13.8,18.2" fill="none" stroke="#a6a6a6" stroke-width="1"/></svg>
<div class="t" style="left:558.30px;top:48.30px;font-size:11.7px;color:#a6a6a6;font-weight:normal;">Wrap Text</div>
<svg class="r" style="left:536px;top:74px;" width="22" height="20" viewBox="0 0 22 20"><rect x="3.5" y="3.5" width="14" height="14" fill="#fff" stroke="#333" stroke-width="1.1"/><path d="M10.5,3.5 V17.5" stroke="#333" stroke-width="1"/><rect x="3.5" y="6.8" width="14" height="7.6" fill="#fff" stroke="#1b87d0" stroke-width="1.2"/><path d="M5.5,10.6 H15.5 M7.6,8.6 L5.5,10.6 L7.6,12.6 M13.4,8.6 L15.5,10.6 L13.4,12.6" fill="none" stroke="#1b87d0" stroke-width="1.2"/></svg>
<div class="t" style="left:558.30px;top:80.00px;font-size:11.7px;color:#444;font-weight:normal;">Merge &amp; Center</div>
<svg class="r" style="left:652.3px;top:82.5px;" width="8" height="6" viewBox="0 0 8 6"><polyline points="1,1.5 4.0,4.5 7,1.5" fill="none" stroke="#444" stroke-width="1.2"/></svg>
<div class="t" style="left:499.00px;top:111.90px;font-size:11.7px;color:#444;font-weight:normal;">Alignment</div>
<svg class="r" style="left:662px;top:114px;" width="9" height="9" viewBox="0 0 9 9"><path d="M0.5,6.5 V0.5 H6.5" fill="none" stroke="#8a8a8a" stroke-width="1"/><path d="M2.5,2.5 L7.5,7.5 M7.5,4 V7.5 H4" fill="none" stroke="#8a8a8a" stroke-width="1"/></svg>
<div class="r" style="left:673px;top:34px;width:1px;height:88px;background:#d6d6d6;"></div>
<div class="r" style="left:682px;top:42px;width:100px;height:23px;background:#f3f2f1;border:1px solid #c8c6c4"></div>
<div class="t" style="left:685.80px;top:48.00px;font-size:11.7px;color:#a19f9d;font-weight:normal;">Number</div>
<svg class="r" style="left:682px;top:74px;" width="22" height="22" viewBox="0 0 22 22"><rect x="3.5" y="6.5" width="15" height="9" fill="#fff" stroke="#333" stroke-width="1.1"/><path d="M8,9 C6.5,9 6,10 6,11 C6,12 6.5,13 8,13 M10.5,13 V9 H12.5" fill="none" stroke="#333" stroke-width="1"/><path d="M11.7,11.5 V17 C11.7,18.8 18.3,18.8 18.3,17 V11.5" fill="#fff" stroke="#e07b1f" stroke-width="1.2"/><ellipse cx="15" cy="11.5" rx="3.3" ry="1.5" fill="#fff" stroke="#e07b1f" stroke-width="1.2"/><path d="M11.7,14.3 C11.7,16 18.3,16 18.3,14.3" fill="none" stroke="#e07b1f" stroke-width="1.1"/></svg>
<svg class="r" style="left:706.3px;top:82.3px;" width="8" height="6" viewBox="0 0 8 6"><polyline points="1,1.5 4.0,4.5 7,1.5" fill="none" stroke="#444" stroke-width="1.2"/></svg>
<svg class="r" style="left:720px;top:74px;" width="44" height="22" viewBox="0 0 44 22"><ellipse cx="7.7" cy="7.4" rx="2.6" ry="3" fill="none" stroke="#333" stroke-width="1.15"/><ellipse cx="15.9" cy="14.4" rx="2.6" ry="3" fill="none" stroke="#333" stroke-width="1.15"/><path d="M16.5,4.3 L7.6,17.6" stroke="#333" stroke-width="1.15"/><path d="M36,5.2 C38.5,5.2 40,7 40,9.5 C40,13 37.5,16 33.8,17 L33.5,16.3 C35.5,15 36.8,13.5 37,12 C35,12.5 32.8,11 32.8,8.6 C32.8,6.6 34.2,5.2 36,5.2 Z" fill="#333"/></svg>
<div class="r" style="left:771px;top:75px;width:1px;height:21px;background:#e1e1e1;"></div>
<div class="t" style="left:723.80px;top:111.90px;font-size:11.7px;color:#444;font-weight:normal;">Number</div>
<div class="r" style="left:0px;top:126px;width:772px;height:1px;background:#d2d0ce;"></div>
<div class="r" style="left:0;top:127px;width:772px;height:6px;background:linear-gradient(rgba(0,0,0,0.09),rgba(0,0,0,0))"></div>
<div class="r" style="left:2px;top:137px;width:102px;height:26px;background:#fff;border:1px solid #c6c6c6"></div>
<div class="t" style="left:9.50px;top:144.74px;font-size:12px;color:#333;font-weight:normal;">D12</div>
<svg class="r" style="left:89px;top:147px" width="9" height="5"><polygon points="0,0 8,0 4,4" fill="#777"/></svg>
<div class="r" style="left:118px;top:145px;width:2px;height:2px;background:#999;"></div>
<div class="r" style="left:118px;top:149.5px;width:2px;height:2px;background:#999;"></div>
<div class="r" style="left:118px;top:154px;width:2px;height:2px;background:#999;"></div>
<div class="r" style="left:134px;top:137px;width:110px;height:26px;background:#fff;border:1px solid #c6c6c6"></div>
<svg class="r" style="left:146px;top:145px" width="13" height="11"><path d="M1.5,0.5 L11.5,10 M11.5,0.5 L1.5,10" stroke="#c8c8c8" stroke-width="1.4"/></svg>
<svg class="r" style="left:182px;top:144px" width="15" height="13"><path d="M1.5,6.5 L5.5,11 L13.5,1.5" fill="none" stroke="#c8c8c8" stroke-width="2.2"/></svg>
<div class="t" style="left:220px;top:142px;font-size:13px;color:#444;font-family:'Liberation Serif',serif;font-style:italic;font-weight:bold">f<span style="font-size:10px">x</span></div>
<div class="r" style="left:247px;top:137px;width:530px;height:26px;background:#fafafa;border:1px solid #c6c6c6"></div>
<div class="r" style="left:328px;top:252px;width:436px;height:318px;background:#f0f0f0;border:1px solid #0078d7;box-shadow:0 4px 16px rgba(0,0,0,0.28)"></div>
<div class="r" style="left:328px;top:252px;width:436px;height:31px;background:#0078d7;"></div>
<div class="t" style="left:337.30px;top:261.74px;font-size:12px;color:#fff;font-weight:normal;transform:scaleX(0.92);transform-origin:0 0">Paste Special</div>
<div class="t" style="left:690.50px;top:260.92px;font-size:12.5px;color:#fff;font-weight:normal;">?</div>
<svg class="r" style="left:734px;top:261px" width="12" height="12"><path d="M1,1 L11,11 M11,1 L1,11" stroke="#fff" stroke-width="1"/></svg>
<div class="t" style="left:336.40px;top:291.85px;font-size:11.4px;color:#000;font-weight:normal;">Paste</div>
<div class="r" style="left:373px;top:296px;width:384px;height:1px;background:#dcdcdc;"></div>
<svg class="r" style="left:345px;top:310px" width="13" height="13"><circle cx="6.5" cy="6.5" r="6" fill="#fff" stroke="#333" stroke-width="1"/></svg>
<div class="t" style="left:365.30px;top:311.95px;font-size:11.4px;color:#000;font-weight:normal;"><u>A</u>ll</div>
<svg class="r" style="left:345px;top:329px" width="13" height="13"><circle cx="6.5" cy="6.5" r="6" fill="#fff" stroke="#333" stroke-width="1"/></svg>
<div class="t" style="left:365.30px;top:330.95px;font-size:11.4px;color:#000;font-weight:normal;"><u>F</u>ormulas</div>
<svg class="r" style="left:345px;top:348px" width="13" height="13"><circle cx="6.5" cy="6.5" r="6" fill="#fff" stroke="#333" stroke-width="1"/><circle cx="6.5" cy="6.5" r="3.6" fill="#333"/></svg>
<div class="t" style="left:365.30px;top:349.95px;font-size:11.4px;color:#000;font-weight:normal;"><u>V</u>alues</div>
<svg class="r" style="left:345px;top:367px" width="13" height="13"><circle cx="6.5" cy="6.5" r="6" fill="#fff" stroke="#333" stroke-width="1"/></svg>
<div class="t" style="left:365.30px;top:368.95px;font-size:11.4px;color:#000;font-weight:normal;">Forma<u>t</u>s</div>
<svg class="r" style="left:345px;top:386px" width="13" height="13"><circle cx="6.5" cy="6.5" r="6" fill="#fff" stroke="#333" stroke-width="1"/></svg>
<div class="t" style="left:365.30px;top:387.95px;font-size:11.4px;color:#000;font-weight:normal;"><u>C</u>omments and Notes</div>
<svg class="r" style="left:345px;top:405px" width="13" height="13"><circle cx="6.5" cy="6.5" r="6" fill="#fff" stroke="#333" stroke-width="1"/></svg>
<div class="t" style="left:365.30px;top:406.95px;font-size:11.4px;color:#000;font-weight:normal;">Validatio<u>n</u></div>
<svg class="r" style="left:556px;top:310px" width="13" height="13"><circle cx="6.5" cy="6.5" r="6" fill="#fff" stroke="#333" stroke-width="1"/></svg>
<div class="t" style="left:576.30px;top:311.95px;font-size:11.4px;color:#000;font-weight:normal;">All using Source t<u>h</u>eme</div>
<svg class="r" style="left:556px;top:329px" width="13" height="13"><circle cx="6.5" cy="6.5" r="6" fill="#fff" stroke="#333" stroke-width="1"/></svg>
<div class="t" style="left:576.30px;top:330.95px;font-size:11.4px;color:#000;font-weight:normal;">All e<u>x</u>cept borders</div>
<svg class="r" style="left:556px;top:348px" width="13" height="13"><circle cx="6.5" cy="6.5" r="6" fill="#fff" stroke="#333" stroke-width="1"/></svg>
<div class="t" style="left:576.30px;top:349.95px;font-size:11.4px;color:#000;font-weight:normal;">Column <u>w</u>idths</div>
<svg class="r" style="left:556px;top:367px" width="13" height="13"><circle cx="6.5" cy="6.5" r="6" fill="#fff" stroke="#333" stroke-width="1"/></svg>
<div class="t" style="left:576.30px;top:368.95px;font-size:11.4px;color:#000;font-weight:normal;">Fo<u>r</u>mulas and number formats</div>
<svg class="r" style="left:556px;top:386px" width="13" height="13"><circle cx="6.5" cy="6.5" r="6" fill="#fff" stroke="#333" stroke-width="1"/></svg>
<div class="t" style="left:576.30px;top:387.95px;font-size:11.4px;color:#000;font-weight:normal;">Val<u>u</u>es and number formats</div>
<svg class="r" style="left:556px;top:405px" width="13" height="13"><circle cx="6.5" cy="6.5" r="6" fill="#fff" stroke="#c4c4c4" stroke-width="1"/></svg>
<div class="t" style="left:576.30px;top:406.95px;font-size:11.4px;color:#9a9a9a;font-weight:normal;">All mer<u>g</u>ing conditional formats</div>
<div class="r" style="left:363px;top:347px;width:38px;height:16px;border:1px dotted #000"></div>
<div class="t" style="left:336.40px;top:424.75px;font-size:11.4px;color:#000;font-weight:normal;">Operation</div>
<div class="r" style="left:399px;top:429px;width:358px;height:1px;background:#dcdcdc;"></div>
<svg class="r" style="left:345px;top:443px" width="13" height="13"><circle cx="6.5" cy="6.5" r="6" fill="#fff" stroke="#333" stroke-width="1"/><circle cx="6.5" cy="6.5" r="3.6" fill="#333"/></svg>
<div class="t" style="left:365.30px;top:444.95px;font-size:11.4px;color:#000;font-weight:normal;">N<u>o</u>ne</div>
<svg class="r" style="left:345px;top:462px" width="13" height="13"><circle cx="6.5" cy="6.5" r="6" fill="#fff" stroke="#333" stroke-width="1"/></svg>
<div class="t" style="left:365.30px;top:463.95px;font-size:11.4px;color:#000;font-weight:normal;">A<u>d</u>d</div>
<svg class="r" style="left:345px;top:481px" width="13" height="13"><circle cx="6.5" cy="6.5" r="6" fill="#fff" stroke="#333" stroke-width="1"/></svg>
<div class="t" style="left:365.30px;top:482.95px;font-size:11.4px;color:#000;font-weight:normal;"><u>S</u>ubtract</div>
<svg class="r" style="left:556px;top:443px" width="13" height="13"><circle cx="6.5" cy="6.5" r="6" fill="#fff" stroke="#333" stroke-width="1"/></svg>
<div class="t" style="left:576.30px;top:444.95px;font-size:11.4px;color:#000;font-weight:normal;"><u>M</u>ultiply</div>
<svg class="r" style="left:556px;top:462px" width="13" height="13"><circle cx="6.5" cy="6.5" r="6" fill="#fff" stroke="#333" stroke-width="1"/></svg>
<div class="t" style="left:576.30px;top:463.95px;font-size:11.4px;color:#000;font-weight:normal;">D<u>i</u>vide</div>
<div class="r" style="left:344px;top:505px;width:413px;height:1px;background:#dcdcdc;"></div>
<div class="r" style="left:345px;top:516px;width:13px;height:13px;background:#fff;border:1px solid #333"></div>
<div class="t" style="left:365.30px;top:517.95px;font-size:11.4px;color:#000;font-weight:normal;">Skip <u>b</u>lanks</div>
<div class="r" style="left:556px;top:516px;width:13px;height:13px;background:#fff;border:1px solid #333"></div>
<div class="t" style="left:576.30px;top:517.95px;font-size:11.4px;color:#000;font-weight:normal;">Transpos<u>e</u></div>
<div class="r" style="left:336px;top:540px;width:73px;height:21px;background:#e1e1e1;border:1px solid #a8a8a8"></div>
<div class="t" style="left:336px;width:73px;text-align:center;top:545.95px;font-size:11.4px;color:#7a7a7a">Paste <u>L</u>ink</div>
<div class="r" style="left:599px;top:540px;width:73px;height:21px;background:#e1e1e1;border:2px solid #0078d7"></div>
<div class="t" style="left:599px;width:73px;text-align:center;top:545.95px;font-size:11.4px;color:#000">OK</div>
<div class="r" style="left:683px;top:540px;width:73px;height:21px;background:#e1e1e1;border:1px solid #adadad"></div>
<div class="t" style="left:683px;width:73px;text-align:center;top:545.95px;font-size:11.4px;color:#000">Cancel</div>
</body></html>
